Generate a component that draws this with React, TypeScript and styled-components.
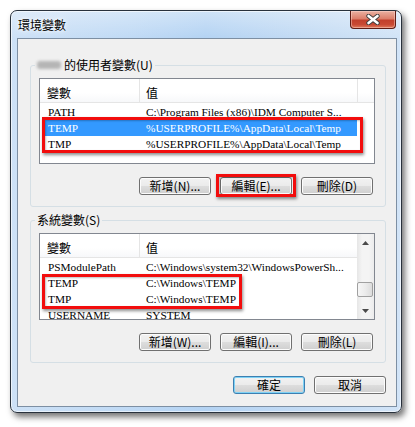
import React from 'react';
import styled, { createGlobalStyle, css } from 'styled-components';

const GlobalStyle = createGlobalStyle`
  html, body {
    margin: 0;
    background: #fff;
  }
  body {
    font-family: "Noto Sans CJK TC", "Liberation Sans", sans-serif;
    font-size: 12px;
    color: #000;
  }
`;

const Desktop = styled.div`
  width: 415px;
  height: 427px;
  box-sizing: border-box;
  padding: 10px 0 0 10px;
  overflow: hidden;
`;

const Window = styled.div`
  width: 392px;
  height: 403px;
  box-sizing: border-box;
  display: flex;
  flex-direction: column;
  padding: 0 4px 5px 6px;
  border: 1px solid #28313c;
  border-radius: 7px;
  background:
    linear-gradient(180deg, rgba(255, 255, 255, 0.35) 0px, rgba(255, 255, 255, 0) 27px),
    linear-gradient(90deg, #cde1f6 0%, #c0daf5 30%, #b4d3f3 50%, #c3dbf4 75%, #d2e4f7 100%);
  box-shadow:
    3px 4px 6px rgba(0, 0, 0, 0.55),
    inset 0 0 0 1px rgba(255, 255, 255, 0.6);
`;

const TitleBar = styled.div`
  height: 27px;
  display: flex;
  align-items: flex-start;
  flex-shrink: 0;
`;

const Title = styled.div`
  line-height: 27px;
  padding-left: 1px;
  font-size: 12px;
  text-shadow: 0 0 6px #fff, 0 0 3px #fff;
`;

const CloseButton = styled.div`
  margin-left: auto;
  margin-right: 1px;
  width: 46px;
  height: 18px;
  box-sizing: border-box;
  display: flex;
  align-items: center;
  justify-content: center;
  border: 1px solid #5e1c14;
  border-top: none;
  border-radius: 0 0 4px 4px;
  background: linear-gradient(180deg, #eab1a2 0%, #dc7f6b 45%, #c2402c 55%, #c94a34 80%, #e07a5c 100%);
  box-shadow: inset 0 0 0 1px rgba(255, 220, 210, 0.45);
`;

const Client = styled.div`
  flex: 1;
  display: flex;
  flex-direction: column;
  border: 1px solid #7d8fa3;
  background: #f0f0f0;
  padding: 19px 10px 0 12px;
`;

const Group = styled.fieldset<{ $gap?: number }>`
  margin: ${p => p.$gap ?? 0}px 0 0 0;
  padding: 6px 10px 11px 8px;
  min-inline-size: 0;
  border: 1px solid #d5dfe5;
  border-radius: 3px;
`;

const Legend = styled.legend`
  margin-left: -4px;
  padding: 0 2px;
  font-size: 12px;
  line-height: 14px;
  display: flex;
  align-items: center;
`;

const Blurred = styled.span`
  display: inline-block;
  width: 24px;
  height: 8px;
  margin: 0 3px 0 0;
  background: #b5b5b5;
  border-radius: 3px;
  filter: blur(1.6px);
`;

const ListBox = styled.div<{ $h: number }>`
  position: relative;
  width: 336px;
  height: ${p => p.$h}px;
  box-sizing: border-box;
  border: 1px solid #828790;
  background: #fff;
  display: flex;
  overflow: hidden;
`;

const ListBody = styled.div`
  flex: 1;
  display: flex;
  flex-direction: column;
`;

const Header = styled.div<{ $full?: boolean }>`
  display: grid;
  grid-template-columns: ${p => (p.$full ? '100px 218px 1fr' : '100px 1fr')};
  height: 24px;
  box-sizing: border-box;
  border-bottom: 1px solid #e5e5e5;
  background: linear-gradient(180deg, #ffffff 0%, #ffffff 60%, #f7f8fa 100%);
  flex-shrink: 0;
`;

const HeadCell = styled.div<{ $pad: number }>`
  border-right: 1px solid #e5e5e5;
  padding: 3px 0 0 ${p => p.$pad}px;
  display: flex;
  align-items: center;
  font-size: 12px;
  &:last-child {
    border-right: none;
  }
`;

const Rows = styled.div`
  padding-top: 1px;
`;

const Row = styled.div<{ $selected?: boolean }>`
  display: grid;
  grid-template-columns: 94px 1fr;
  margin-left: 5px;
  width: 312px;
  height: 16px;
  line-height: 16px;
  font-family: "Liberation Serif", "Noto Sans CJK TC", serif;
  font-size: 11.3px;
  white-space: nowrap;
  ${p =>
    p.$selected &&
    css`
      background: #3399ff;
      color: #fff;
    `}
`;

const Cell = styled.div<{ $pad: number }>`
  padding-left: ${p => p.$pad}px;
  overflow: hidden;
`;

const Mark = styled.div<{ $x: number; $y: number; $w: number; $h: number }>`
  position: absolute;
  left: ${p => p.$x}px;
  top: ${p => p.$y}px;
  width: ${p => p.$w}px;
  height: ${p => p.$h}px;
  box-sizing: border-box;
  border: 3px solid #f20d0d;
  box-shadow: 1px 2px 3px rgba(0, 0, 0, 0.45), inset 1px 1px 2px rgba(0, 0, 0, 0.25);
  pointer-events: none;
`;

const ScrollBar = styled.div`
  width: 17px;
  display: flex;
  flex-direction: column;
  background: linear-gradient(90deg, #e6e6e6 0%, #f4f4f4 30%, #f4f4f4 70%, #ececec 100%);
`;

const Arrow = styled.div`
  height: 17px;
  display: flex;
  align-items: center;
  justify-content: center;
`;

const Track = styled.div`
  flex: 1;
`;

const Thumb = styled.div<{ $top: number }>`
  margin: ${p => p.$top}px 1px 0 0;
  height: 15px;
  box-sizing: border-box;
  border: 1px solid #a0a0a0;
  border-radius: 2px;
  background: linear-gradient(90deg, #f6f6f6 0%, #ececec 50%, #dcdcdc 100%);
`;

const ButtonRow = styled.div<{ $top: number; $right?: number }>`
  display: flex;
  justify-content: flex-end;
  gap: 9px;
  margin-top: ${p => p.$top}px;
  padding-right: ${p => p.$right ?? 2}px;
`;

const Button = styled.div<{ $default?: boolean; $marked?: boolean }>`
  position: relative;
  width: 72px;
  height: 18px;
  box-sizing: border-box;
  display: flex;
  align-items: center;
  justify-content: center;
  border: 1px solid #707070;
  border-radius: 3px;
  font-size: 12px;
  line-height: 16px;
  background: linear-gradient(180deg, #f2f2f2 0%, #ebebeb 48%, #dddddd 52%, #cfcfcf 100%);
  box-shadow: inset 0 0 0 1px #fcfcfc;
  ${p =>
    p.$default &&
    css`
      border-color: #3c7fb1;
      box-shadow: inset 0 0 0 1px #7fd2f5;
    `}
  ${p =>
    p.$marked &&
    css`
      &::after {
        content: '';
        position: absolute;
        inset: -4px -5px -3px -5px;
        border: 3px solid #f20d0d;
        box-shadow: 1px 2px 3px rgba(0, 0, 0, 0.45), inset 1px 1px 2px rgba(0, 0, 0, 0.25);
      }
    `}
`;

const userVars = [
  { name: 'PATH', value: 'C:\\Program Files (x86)\\IDM Computer S...' },
  { name: 'TEMP', value: '%USERPROFILE%\\AppData\\Local\\Temp', selected: true },
  { name: 'TMP', value: '%USERPROFILE%\\AppData\\Local\\Temp' },
];

const sysVars = [
  { name: 'PSModulePath', value: 'C:\\Windows\\system32\\WindowsPowerSh...' },
  { name: 'TEMP', value: 'C:\\Windows\\TEMP' },
  { name: 'TMP', value: 'C:\\Windows\\TEMP' },
  { name: 'USERNAME', value: 'SYSTEM' },
];

type Item = { name: string; value: string; selected?: boolean };

const VarRows = ({ items }: { items: Item[] }) => (
  <Rows>
    {items.map(v => (
      <Row key={v.name} $selected={v.selected}>
        <Cell $pad={3}>{v.name}</Cell>
        <Cell $pad={7}>{v.value}</Cell>
      </Row>
    ))}
  </Rows>
);

const CloseGlyph = () => (
  <svg width="16" height="11" viewBox="0 0 16 11">
    <path d="M3.5 2 L12.5 9 M12.5 2 L3.5 9" stroke="#3d3d3d" strokeWidth="4.4" strokeLinecap="round" />
    <path d="M3.5 2 L12.5 9 M12.5 2 L3.5 9" stroke="#ffffff" strokeWidth="2.6" strokeLinecap="round" />
  </svg>
);

const ArrowGlyph = ({ down }: { down?: boolean }) => (
  <svg width="7" height="4" viewBox="0 0 7 4">
    <path d={down ? 'M0 0 H7 L3.5 4 Z' : 'M0 4 H7 L3.5 0 Z'} fill="#4a4a4a" />
  </svg>
);

export default function App() {
  return (
    <Desktop>
      <GlobalStyle />
      <Window>
        <TitleBar>
          <Title>環境變數</Title>
          <CloseButton>
            <CloseGlyph />
          </CloseButton>
        </TitleBar>

        <Client>
          <Group>
            <Legend>
              <Blurred />
              的使用者變數(U)
            </Legend>
            <ListBox $h={86}>
              <ListBody>
                <Header $full>
                  <HeadCell $pad={7}>變數</HeadCell>
                  <HeadCell $pad={6}>值</HeadCell>
                  <HeadCell $pad={0} />
                </Header>
                <VarRows items={userVars} />
              </ListBody>
              <Mark $x={2} $y={38} $w={321} $h={36} />
            </ListBox>
            <ButtonRow $top={13}>
              <Button>新增(N)...</Button>
              <Button $marked>編輯(E)...</Button>
              <Button>刪除(D)</Button>
            </ButtonRow>
          </Group>

          <Group $gap={6}>
            <Legend>系統變數(S)</Legend>
            <ListBox $h={87}>
              <ListBody>
                <Header>
                  <HeadCell $pad={7}>變數</HeadCell>
                  <HeadCell $pad={6}>值</HeadCell>
                </Header>
                <VarRows items={sysVars} />
              </ListBody>
              <ScrollBar>
                <Arrow>
                  <ArrowGlyph />
                </Arrow>
                <Track>
                  <Thumb $top={31} />
                </Track>
                <Arrow>
                  <ArrowGlyph down />
                </Arrow>
              </ScrollBar>
              <Mark $x={2} $y={40} $w={200} $h={35} />
            </ListBox>
            <ButtonRow $top={13}>
              <Button>新增(W)...</Button>
              <Button>編輯(I)...</Button>
              <Button>刪除(L)</Button>
            </ButtonRow>
          </Group>

          <ButtonRow $top={13} $right={0}>
            <Button $default>確定</Button>
            <Button>取消</Button>
          </ButtonRow>
        </Client>
      </Window>
    </Desktop>
  );
}
